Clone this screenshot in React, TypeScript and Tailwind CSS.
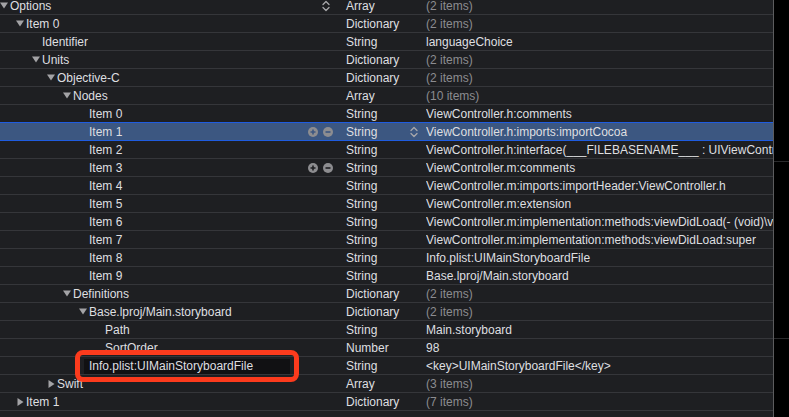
import React from "react";

type Row = {
  key: string;
  level: number;
  tri?: "down" | "right";
  type: string;
  value: string;
  muted?: boolean;
  selected?: boolean;
  plusMinus?: boolean;
  headerStepper?: boolean;
  editing?: boolean;
};

const rows: Row[] = [
  { key: "Options", level: 0, tri: "down", type: "Array", value: "(2 items)", muted: true, headerStepper: true },
  { key: "Item 0", level: 1, tri: "down", type: "Dictionary", value: "(2 items)", muted: true },
  { key: "Identifier", level: 2, type: "String", value: "languageChoice" },
  { key: "Units", level: 2, tri: "down", type: "Dictionary", value: "(2 items)", muted: true },
  { key: "Objective-C", level: 3, tri: "down", type: "Dictionary", value: "(2 items)", muted: true },
  { key: "Nodes", level: 4, tri: "down", type: "Array", value: "(10 items)", muted: true },
  { key: "Item 0", level: 5, type: "String", value: "ViewController.h:comments" },
  { key: "Item 1", level: 5, type: "String", value: "ViewController.h:imports:importCocoa", selected: true, plusMinus: true },
  { key: "Item 2", level: 5, type: "String", value: "ViewController.h:interface(___FILEBASENAME___ : UIViewController" },
  { key: "Item 3", level: 5, type: "String", value: "ViewController.m:comments", plusMinus: true },
  { key: "Item 4", level: 5, type: "String", value: "ViewController.m:imports:importHeader:ViewController.h" },
  { key: "Item 5", level: 5, type: "String", value: "ViewController.m:extension" },
  { key: "Item 6", level: 5, type: "String", value: "ViewController.m:implementation:methods:viewDidLoad(- (void)\\viewDidLoad" },
  { key: "Item 7", level: 5, type: "String", value: "ViewController.m:implementation:methods:viewDidLoad:super" },
  { key: "Item 8", level: 5, type: "String", value: "Info.plist:UIMainStoryboardFile" },
  { key: "Item 9", level: 5, type: "String", value: "Base.lproj/Main.storyboard" },
  { key: "Definitions", level: 4, tri: "down", type: "Dictionary", value: "(2 items)", muted: true },
  { key: "Base.lproj/Main.storyboard", level: 5, tri: "down", type: "Dictionary", value: "(2 items)", muted: true },
  { key: "Path", level: 6, type: "String", value: "Main.storyboard" },
  { key: "SortOrder", level: 6, type: "Number", value: "98" },
  { key: "Info.plist:UIMainStoryboardFile", level: 5, type: "String", value: "<key>UIMainStoryboardFile</key>", editing: true },
  { key: "Swift", level: 3, tri: "right", type: "Array", value: "(3 items)", muted: true },
  { key: "Item 1", level: 1, tri: "right", type: "Dictionary", value: "(7 items)", muted: true },
];

const textLeft = [10, 26, 42, 57, 73, 89, 105];

function Stepper() {
  return (
    <svg width="8" height="12" viewBox="0 0 8 12">
      <path d="M1 4.5 L4 1.5 L7 4.5" stroke="#a8a8ab" strokeWidth="1.3" fill="none" strokeLinecap="round" strokeLinejoin="round" />
      <path d="M1 7.5 L4 10.5 L7 7.5" stroke="#a8a8ab" strokeWidth="1.3" fill="none" strokeLinecap="round" strokeLinejoin="round" />
    </svg>
  );
}

function PlusMinus({ bg }: { bg: string }) {
  return (
    <div className="flex items-center gap-[5px]">
      <svg width="10" height="10" viewBox="0 0 10 10">
        <circle cx="5" cy="5" r="5" fill="#8d8d90" />
        <path d="M5 2.5 V7.5 M2.5 5 H7.5" stroke={bg} strokeWidth="1.6" />
      </svg>
      <svg width="10" height="10" viewBox="0 0 10 10">
        <circle cx="5" cy="5" r="5" fill="#8d8d90" />
        <path d="M2.5 5 H7.5" stroke={bg} strokeWidth="1.6" />
      </svg>
    </div>
  );
}

export default function App() {
  return (
    <div
      className="relative flex w-[789px] h-[417px] overflow-hidden bg-black text-[12px] text-[#dfdfe0]"
      style={{ fontFamily: '"Liberation Sans", Arial, sans-serif' }}
    >
      <div className="w-[774px] h-full bg-[#1e1f22] border-r border-[#5c5c5e] flex flex-col">
        <div className="-mt-[3px] flex flex-col">
          {rows.map((r, i) => {
            const bg = r.selected ? "#3c5781" : "#1e1f22";
            return (
              <div
                key={i}
                className={
                  r.selected
                    ? "relative flex items-center h-[18px] shrink-0 bg-[#3c5781] border-b border-[#1f5ce0]"
                    : "relative flex items-center h-[18px] shrink-0 border-b border-[#35363a]"
                }
              >
                {r.selected && <div className="absolute left-0 right-0 -top-px h-px bg-[#1f5ce0]" />}
                <div className="relative w-[346px] h-full flex items-center">
                  {r.tri && (
                    <div
                      className="absolute top-0 h-full flex items-center"
                      style={{ left: textLeft[r.level] - 10 }}
                    >
                      {r.tri === "down" ? (
                        <svg width="8" height="7" viewBox="0 0 8 7">
                          <path d="M0 0.5 H8 L4 6.5 Z" fill="#a3a3a6" />
                        </svg>
                      ) : (
                        <svg width="7" height="8" viewBox="0 0 7 8" className="ml-[1px]">
                          <path d="M0.5 0 V8 L6.5 4 Z" fill="#a3a3a6" />
                        </svg>
                      )}
                    </div>
                  )}
                  {r.editing && (
                    <div className="absolute left-[84px] top-[2px] w-[206px] h-[15px] bg-[#111113]" />
                  )}
                  <span className="relative whitespace-nowrap" style={{ marginLeft: textLeft[r.level] }}>
                    {r.key}
                  </span>
                  {r.headerStepper && (
                    <div className="absolute left-[322px] top-0 h-full flex items-center">
                      <Stepper />
                    </div>
                  )}
                  {r.plusMinus && (
                    <div className="absolute left-[308px] top-0 h-full flex items-center">
                      <PlusMinus bg={bg} />
                    </div>
                  )}
                </div>
                <div className="relative w-[80px] h-full flex items-center whitespace-nowrap">
                  {r.type}
                  {r.selected && (
                    <div className="absolute left-[64px] top-0 h-full flex items-center">
                      <Stepper />
                    </div>
                  )}
                </div>
                <div
                  className={
                    "flex-1 min-w-0 overflow-hidden whitespace-nowrap " + (r.muted ? "text-[#8c8c90]" : "")
                  }
                >
                  {r.value}
                </div>
              </div>
            );
          })}
        </div>
      </div>
      <div className="flex-1 flex flex-col">
        <div className="h-[161px]" />
        <div className="h-px bg-[#2a2a2c]" />
        <div className="h-[176px]" />
        <div className="h-px bg-[#2a2a2c]" />
      </div>
      <div className="absolute left-[75px] top-[350px] w-[224px] h-[32px] border-[5px] border-[#fc3b1d] rounded-[8px]" />
    </div>
  );
}
